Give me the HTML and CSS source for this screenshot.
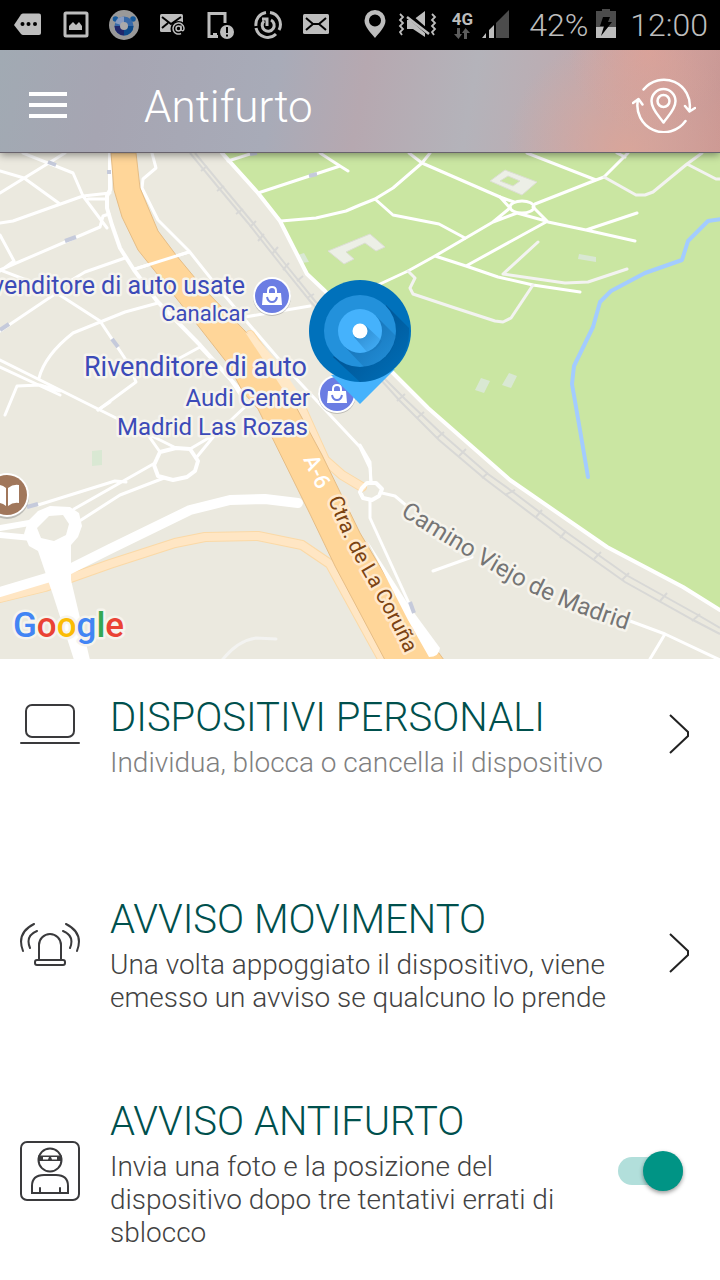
FILE: index.html
```html
<!DOCTYPE html>
<html lang="it">
<head>
    <meta charset="UTF-8">
    <meta name="viewport" content="width=device-width, initial-scale=1.0">
    <title>Antifurto</title>
    <link rel="stylesheet" href="styles.css">
</head>
<body>
    <div class="status-bar">
        <div class="status-left">
            <svg class="status-icon" viewBox="0 0 30 30"><path fill="#bdbdbd" d="M1 15L8 4.500Q9 3.500 10 3.500H26Q28 3.500 28 5.500V23Q28 25 26 25H10Q9 25 8 24Z"/><circle cx="9.500" cy="14" r="2"/><circle cx="15.500" cy="14" r="2"/><circle cx="22" cy="14" r="2"/></svg>
            <svg class="status-icon" viewBox="0 0 30 30"><rect x="4" y="3" width="22" height="23" rx="1" fill="none" stroke="#bdbdbd" stroke-width="3"/><path fill="#bdbdbd" d="M8 20V16L12 12L15 15L18 12L21 16V20Z"/></svg>
            <svg class="status-icon" viewBox="0 0 30 30"><circle cx="15" cy="15" r="15" fill="#999"/><circle cx="6.500" cy="9" r="2.800" fill="#15599c"/><circle cx="24" cy="9" r="2.800" fill="#15599c"/><circle cx="15" cy="16" r="9.500" fill="#3769a8"/><path fill="#879bc0" d="M15 16V6.500A9.500 9.500 0 0 0 6 13Z"/><path fill="#20276c" d="M15 16H5.500A9.500 9.500 0 0 0 15 25.500Z"/><path fill="#0c4a8a" d="M15 16H24.500A9.500 9.500 0 0 1 15 25.500Z"/><circle cx="15" cy="16" r="4" fill="#aaa"/></svg>
            <svg class="status-icon" viewBox="0 0 30 30"><rect x="3" y="4" width="23" height="18" rx="1.500" fill="#bdbdbd"/><path d="M5 7L14 14L24 7M5 18L11 13" fill="none" stroke="#000" stroke-width="2"/><circle cx="21.500" cy="19" r="8" fill="#000"/><circle cx="21.500" cy="18.500" r="2.500" fill="none" stroke="#bdbdbd" stroke-width="1.500"/><path d="M24 15.500V20Q27 22 27 18A5.500 5.500 0 1 0 24 23.500" fill="none" stroke="#bdbdbd" stroke-width="1.500"/></svg>
            <svg class="status-icon" viewBox="0 0 30 30"><path d="M20 13V3.500H4V26.500H13" fill="none" stroke="#bdbdbd" stroke-width="3"/><path d="M8 24H12" stroke="#bdbdbd" stroke-width="2"/><circle cx="22" cy="22" r="7" fill="#bdbdbd"/><path d="M22 17V23M22 24.500V26.500" stroke="#000" stroke-width="2"/></svg>
            <svg class="status-icon" viewBox="0 0 30 30"><g fill="none" stroke="#bdbdbd" stroke-width="3"><path d="M13 2.500A12 12 0 0 0 3 16M3 18A12 12 0 0 0 23 24M17 2.500A12 12 0 0 1 26 20"/><path d="M9 9H14V16M11 11A6 6 0 1 0 18 10"/></g></svg>
            <svg class="status-icon" viewBox="0 0 30 30"><rect x="2" y="4" width="26" height="20" rx="1.500" fill="#bdbdbd"/><path d="M5 8L12 14H18L25 8M5 20L12 14M25 20L18 14" fill="none" stroke="#000" stroke-width="2"/></svg>
        </div>
        <div class="status-right">
            <svg width="22" height="30" viewBox="0 0 22 30"><path fill="#bdbdbd" fill-rule="evenodd" d="M11 0A10.500 10.500 0 0 0 .5 10.500C.5 17 7 23 11 28C15 23 21.500 17 21.500 10.500A10.500 10.500 0 0 0 11 0ZM11 4.500A6 6 0 1 1 11 16.500A6 6 0 0 1 11 4.500Z"/></svg>
            <svg class="sound-icon" width="38" height="30" viewBox="0 0 38 30"><path fill="#bdbdbd" d="M9 10H15L27 1V27L15 19H9Z"/><path d="M10 5L32 24" stroke="#000" stroke-width="5"/><path d="M9 7L31 24" stroke="#bdbdbd" stroke-width="2.500"/><path d="M2 4L5 7L2 10L5 13L2 16L5 19L2 22L4 25M34 4L37 7L34 10L37 13L34 16L37 19L34 22L36 25" fill="none" stroke="#bdbdbd" stroke-width="1.800"/></svg>
            <div class="network">
                <span>4G</span>
                <svg width="16" height="12" viewBox="0 0 16 12"><path fill="#5c5c5c" d="M3 0H6V6H8L4.500 11L0 6H3ZM10 11H13V5H16L11.500 0L8 5H10Z"/></svg>
            </div>
            <svg width="28" height="30" viewBox="0 0 28 30"><path fill="#bdbdbd" d="M1 28L5 23V28ZM8 28V20L13 15V28Z"/><path fill="#4c4c4c" d="M15 28V13L28 0V28Z"/></svg>
            <span class="battery-level">42%</span>
            <svg width="20" height="30" viewBox="0 0 20 30"><path fill="#4c4c4c" d="M0 1H6V-1H14V1H20V28H0Z"/><path fill="#bdbdbd" d="M0 17H20V28H0Z"/><path d="M7 7H14L12 12H16L5 26L8 16H4Z"/></svg>
            <span class="clock">12:00</span>
        </div>
    </div>

    <header class="app-bar">
        <button class="menu-button" aria-label="Menu">
            <span></span>
            <span></span>
            <span></span>
        </button>
        <h1>Antifurto</h1>
        <button class="locate-button" aria-label="Localizza">
            <svg width="64" height="56" viewBox="0 0 64 56" fill="none" stroke="#fff" stroke-width="2.500" stroke-linecap="round" stroke-linejoin="round">
                <path d="M11.500 12.500A26 26 0 0 1 57.500 33M53 29L57.500 34.500L63 31"/>
                <path d="M53.500 44A26.500 26.500 0 0 1 6 23M1 26L6.500 22L10.500 27.500"/>
                <path d="M31.500 45.500C28 40 19.500 33 19.500 24A12 12 0 0 1 43.500 24C43.500 33 35 40 31.500 45.500Z"/>
                <circle cx="31.500" cy="24" r="6"/>
            </svg>
        </button>
    </header>

    <main>
        <section class="map" aria-label="Mappa">
            <svg viewBox="0 153 720 506" preserveAspectRatio="xMidYMid slice">
                <defs>
                    <path id="camino" d="M400 515C440 540 480 565 522 588Q575 615 650 637"/>
                    <path id="coruna" d="M328 499C340 530 351 553 368 582C382 607 394 628 410 664"/>
                    <linearGradient id="ring-shade" x1="0" y1="0" x2="1" y2="1">
                        <stop offset="0" stop-color="#003e76" stop-opacity="0.800"/>
                        <stop offset="1" stop-color="#003e76" stop-opacity="0"/>
                    </linearGradient>
                    <g id="shop">
                        <circle cy="1" r="19" fill="#777" opacity="0.400"/>
                        <circle r="19" fill="#fff"/>
                        <circle r="17" fill="#6b7de3"/>
                        <path fill="#fff" d="M-9 -3H9L10 9H-10Z"/>
                        <path d="M-4 -2V-5Q-4 -9 0 -9Q4 -9 4 -5V-2" fill="none" stroke="#fff" stroke-width="2"/>
                        <path d="M-5 1Q-4 6 0 6Q4 6 5 1" fill="none" stroke="#6b7de3" stroke-width="2"/>
                    </g>
                </defs>

                <rect y="153" width="720" height="506" fill="#ebe9df"/>
                <path class="park" d="M222 153L258 193L280 221L307 274L325 291L360 328L392 372L428 408L510 480L607 547L683 587L720 610V153Z"/>
                <path fill="#d9e8d3" d="M92 451L102 450V465L92 466ZM298 255L304 253L309 262L301 263ZM579 254L596 257V262L578 259ZM481 378L490 381L484 393L475 390ZM509 373L517 376L511 388L502 385Z"/>

                <!-- buildings -->
                <path class="building" fill-rule="evenodd" d="M505 170L537 182L522 195L490 181ZM508 176L500 181L513 186L520 181Z"/>
                <path class="building" d="M328 251L370 234L385 247L376 251L365 243L346 252L354 259L344 264Z"/>

                <!-- railway -->
                <g class="railway">
                    <path d="M190 153L218 187L248 223L281 265L310 301L381 380L400 401L439 440L485 479L510 498L563 538L625 582L695 621L720 634"/>
                    <path d="M195 153L223 187L253 223L286 265L315 301L386 380L405 399L442 434L488 474L513 492L566 532L628 576L698 615L720 628"/>
                    <path d="M201 171L207 166M217 191L224 186M236 214L243 209M250 227L256 221M258 241L264 234M272 254L278 247M283 270L289 263M297 281L303 276M307 298L314 294M397 401L405 394M417 418L424 412M437 438L444 432M459 456L466 449M482 478L488 473M505 495L515 490M536 517L542 510M560 538L566 531M594 559L601 552M622 580L629 573M660 601L667 593M692 621L700 614"/>
                </g>

                <!-- park roads -->
                <g class="street">
                    <path d="M409 153L422 163L500 197M430 153L422 163L393 188L375 199L360 205L346 211L316 218L281 221M258 193L340 166L320 153M340 166L348 171M228 161L253 153M375 199L393 215L439 224L465 238M527 153L596 180L604 177L628 153M596 180L535 204M617 153L625 157"/>
                    <path d="M500 197L514 202M500 197L510 208L493 222M517 213L493 222L435 256L408 271L380 284L360 293M517 213L546 221M533 207L548 222L586 230L635 241M586 230L637 213M546 222L466 266M435 256L466 266L498 277L533 285L580 292"/>
                    <ellipse cx="522" cy="207" rx="12" ry="6"/>
                </g>
                <g class="path">
                    <path d="M538 242L503 274L565 283L588 282L627 269M408 271L415 278L410 288L413 294L455 308L495 321L503 322L511 318L533 285M604 177L636 195L645 195L653 192L687 164L702 153M687 164L716 179H720"/>
                    <path d="M220 663Q236 641 256 638L276 639"/>
                </g>
                <path class="river" d="M722 219L708 221L688 241L682 260L645 273L611 291L600 302L593 327L574 366L572 384L580 430L588 477"/>
                <path class="road" d="M222 153L258 193L280 221L307 274L325 291L360 328L392 372L428 408L510 480L607 547L683 587L720 610"/>

                <!-- town streets -->
                <g class="street">
                    <path d="M0 171L24 178L60 204M23 153L73 173L83 196L107 228M65 153L0 193M0 223L13 221L83 196L110 193M88 199H107M0 235L14 261M0 270L100 227L103 216L109 214M14 261L0 271"/>
                    <path d="M125 258L85 272L55 290M55 292L100 321L128 363L136 382L98 410M0 331L58 292L0 270M158 303L125 312L73 333Q45 355 39 378"/>
                    <path d="M0 360L58 389L120 420M0 367L60 395M5 415L17 386L40 385L60 391M98 410L110 402M178 359L200 347L230 379L247 405M148 435L160 452M150 435L174 447M190 449L212 436M196 458L214 436L247 405"/>
                    <path d="M152 153L156 168L143 179L142 188L158 220L189 251L220 290L247 322L290 372L330 415L360 447L370 468L371 483M135 269L189 252M245 317L310 306"/>
                    <path d="M38 505L115 481L126 482M74 509L155 463M78 522L120 495L164 478M433 571L472 557M720 660L665 634L630 621M665 634L650 659"/>
                </g>
                <path class="road" d="M110 153V190L107 196V208L112 225L120 248L134 270L157 301L200 345L240 390"/>
                <path class="roundabout" d="M160 452L176 448L190 449L198 461L195 471L187 477L173 480L158 476L154 465Z"/>

                <!-- one way markers -->
                <path class="marker" d="M48 162L56 165M107 172H111M309 176L317 174M65 241L76 237M0 330L9 324M112 339L118 347M27 507L38 504M250 154L257 153"/>

                <!-- ramps and highway -->
                <path class="ramp-edge" d="M0 598L45 587L110 564L175 543L205 537L258 536L302 545L330 564L370 637L385 664M250 335L300 405L325 460L342 475L362 487"/>
                <path class="ramp" d="M0 598L45 587L110 564L175 543L205 537L258 536L302 545L330 564L370 637L385 664M250 335L300 405L325 460L342 475L362 487"/>
                <path class="highway" d="M111 153L114 190L122 217L138 250L158 275L192 318L228 364L243 392L258 409L310 514L335 566L385 660H444L400 600L360 533L322 455L295 405L270 365L245 331L205 290L176 255L158 231L140 188L136 153Z"/>
                <path fill="#ffe8c7" d="M245 332L260 342L280 365L310 410L300 405L282 388Z"/>
                <path class="street" d="M135 269L189 252"/>
                <path class="avenue" d="M0 592L60 574L110 549L190 510L230 500L265 499L298 503"/>
                <path class="avenue avenue-narrow" d="M0 528L35 522M0 535L32 538"/>
                <path fill="#fff" fill-rule="evenodd" d="M50 506L70 507L79 513L82 526L78 537L71 545V580L90 660H74L53 595L38 551L29 546L24 534L28 521L38 511ZM49 516L63 515L69 524L66 535L54 541L41 538L37 528Z"/>
                <path class="roundabout" d="M362 488L367 483H376L382 489L379 496L372 500L363 498L360 492Z"/>
                <path class="street" d="M370 500V518L402 588L412 610M382 493L395 496L408 507M371 483L370 462L360 445"/>
                <path fill="#fff" d="M367 540L408 604L415 614L440 648Q439 657 429 657L408 620L390 585Z"/>
                <path class="marker" d="M410 602L414 613"/>

                <g class="road-label">
                    <text class="highway-ref" transform="translate(303 459) rotate(65)">A-6</text>
                    <text class="label-coruna"><textPath href="#coruna">Ctra. de La Coruña</textPath></text>
                    <text class="label-camino"><textPath href="#camino">Camino Viejo de Madrid</textPath></text>
                </g>

                <use href="#shop" x="272" y="296"/>
                <use href="#shop" x="337" y="394"/>
                <circle cx="7" cy="497" r="22" fill="#777" opacity="0.400"/>
                <circle cx="7" cy="495" r="22" fill="#fff"/>
                <circle cx="7" cy="495" r="20" fill="#a1775b"/>
                <path fill="#fff" d="M8 488Q13 484 19 485V503Q13 502 8 506ZM6 488Q1 484 -5 485V503Q1 502 6 506Z"/>

                <g class="place-label">
                    <text class="place-large" x="245" y="294">Rivenditore di auto usate</text>
                    <text x="248" y="321">Canalcar</text>
                    <text class="place-title" x="307" y="376">Rivenditore di auto</text>
                    <text class="place-medium" x="310" y="406">Audi Center</text>
                    <text class="place-medium" x="308" y="435">Madrid Las Rozas</text>
                </g>

                <!-- device pin -->
                <path fill="#45b2fc" d="M331 375L360 404L395 369Z"/>
                <circle cx="360" cy="331" r="51" fill="#0071bb"/>
                <path fill="url(#ring-shade)" d="M386 305L409 328Q410 350 395 367Q380 382 360 382L333 357Z"/>
                <circle cx="360" cy="331" r="36" fill="#2391db"/>
                <path fill="url(#ring-shade)" opacity="0.600" d="M376 316L396 336Q393 362 364 367L344 346Z"/>
                <circle cx="360" cy="331" r="22" fill="#45b2fc"/>
                <path fill="url(#ring-shade)" opacity="0.500" d="M365 325L382 341Q378 351 367 352L354 337Z"/>
                <circle cx="360" cy="331" r="7.500" fill="#fff"/>

                <text class="google" x="13" y="637"><tspan fill="#4285f4">G</tspan><tspan fill="#ea4335">o</tspan><tspan fill="#fbbc05">o</tspan><tspan fill="#4285f4">g</tspan><tspan fill="#34a853">l</tspan><tspan fill="#ea4335">e</tspan></text>
            </svg>
        </section>

        <ul class="options">
            <li>
                <a class="option" href="#dispositivi">
                    <svg class="option-icon" viewBox="0 0 60 64"><rect x="6" y="1" width="48" height="32" rx="6"/><path d="M1 39H59"/></svg>
                    <div class="option-text">
                        <h2>DISPOSITIVI PERSONALI</h2>
                        <p class="muted">Individua, blocca o cancella il dispositivo</p>
                    </div>
                    <div class="option-action">
                        <svg class="chevron" viewBox="0 0 22 42"><path d="M2 2L20 19V23L2 40"/></svg>
                    </div>
                </a>
            </li>
            <li>
                <a class="option" href="#movimento">
                    <svg class="option-icon" viewBox="0 0 60 64"><path d="M19 37V22A11 11 0 0 1 41 22V37"/><rect x="15" y="37" width="30" height="5" rx="2"/><path d="M17 8Q5 13 10 25M43 8Q55 13 50 25M14 1Q-4 10 3 28M46 1Q64 10 57 28"/></svg>
                    <div class="option-text">
                        <h2>AVVISO MOVIMENTO</h2>
                        <p>Una volta appoggiato il dispositivo, viene emesso un avviso se qualcuno lo prende</p>
                    </div>
                    <div class="option-action">
                        <svg class="chevron" viewBox="0 0 22 42"><path d="M2 2L20 19V23L2 40"/></svg>
                    </div>
                </a>
            </li>
            <li>
                <div class="option">
                    <svg class="option-icon" viewBox="0 0 60 64"><rect x="1" y="1" width="58" height="58" rx="6"/><circle cx="30" cy="19" r="11.500"/><path fill="#3a3a3c" stroke="none" fill-rule="evenodd" d="M18 14.500H42V20H18ZM23 16V18.500H28L29 16ZM31 16L32 18.500H37V16Z"/><path d="M12 52V45Q12 34 24 34H36Q48 34 48 45V52ZM20 47V52M40 47V52"/></svg>
                    <label class="option-text" for="avviso-antifurto">
                        <h2>AVVISO ANTIFURTO</h2>
                        <p>Invia una foto e la posizione del dispositivo dopo tre tentativi errati di sblocco</p>
                    </label>
                    <div class="option-action">
                        <input class="switch" type="checkbox" id="avviso-antifurto" checked>
                    </div>
                </div>
            </li>
        </ul>
    </main>
</body>
</html>
```

FILE: styles.css
```css
* {
    box-sizing: border-box;
}
body {
    font-family: Roboto, "Noto Sans", sans-serif;
    font-weight: 300;
    background-color: #ffffff;
    color: #424242;
    margin: 0;
}
h1, h2, p, ul {
    margin: 0;
    padding: 0;
    font-weight: 300;
}
button {
    background: none;
    border: none;
    padding: 0;
    cursor: pointer;
}

/* Status bar */
.status-bar {
    display: flex;
    justify-content: space-between;
    align-items: center;
    height: 50px;
    padding: 0 12px 0 13px;
    background-color: #000000;
    color: #bdbdbd;
}
.status-bar svg {
    overflow: visible;
}
.status-left {
    display: flex;
    gap: 18px;
}
.status-icon {
    width: 30px;
    height: 30px;
}
.status-right {
    display: flex;
    align-items: center;
    gap: 8px;
    font-size: 32px;
    line-height: 48px;
}
.sound-icon {
    margin: 0 8px 0 4px;
}
.network {
    display: flex;
    flex-direction: column;
    align-items: center;
    font-size: 17px;
    font-weight: 700;
    line-height: 17px;
}
.battery-level {
    margin-left: 12px;
}
.clock {
    margin-left: 6px;
}

/* App bar */
.app-bar {
    position: relative;
    display: flex;
    align-items: center;
    height: 103px;
    padding: 8px 24px 0 29px;
    background-image:
        radial-gradient(circle at 90% 0, rgba(230, 162, 148, 0.6), transparent 80px),
        radial-gradient(circle at 87% 100%, rgba(222, 166, 152, 0.8), transparent 120px),
        linear-gradient(100deg, #a1aab3, #a6a5b2 15%, #a8abb8 38%, #b6a8b0 50%, #b4b3ba 65%, #bfaaaf 80%, #ca9793);
    border-bottom: 1px solid #68636c;
    box-shadow: 0 2px 8px rgba(0, 0, 0, 0.4);
}
.menu-button {
    display: grid;
    gap: 7px;
    width: 38px;
}
.menu-button span {
    height: 4px;
    background-color: #ffffff;
}
.app-bar h1 {
    flex: 1;
    margin-left: 77px;
    padding-top: 4px;
    color: #ffffff;
    font-size: 44px;
    line-height: 56px;
}
.locate-button svg {
    display: block;
}

/* Map */
.map svg {
    display: block;
    width: 100%;
}
.park {
    fill: #cae6a2;
}
.building {
    fill: #ecefe6;
    stroke: #dcded3;
}
.railway {
    fill: none;
    stroke: #d8d8d6;
    stroke-width: 2;
}
.street,
.road,
.path,
.river,
.roundabout,
.ramp,
.ramp-edge,
.avenue {
    fill: none;
    stroke: #ffffff;
    stroke-width: 3;
    stroke-linecap: round;
    stroke-linejoin: round;
}
.road,
.roundabout {
    stroke-width: 4;
}
.path {
    stroke: #f3f3f1;
}
.river {
    stroke: #a3ccff;
    stroke-width: 4;
}
.ramp {
    stroke: #ffe6c4;
    stroke-width: 8;
}
.ramp-edge {
    stroke: #fbd9a6;
    stroke-width: 10;
}
.highway {
    fill: #ffd699;
    stroke: #e6bd85;
}
.avenue {
    stroke-width: 10;
}
.avenue-narrow {
    stroke-width: 6;
}
.marker {
    stroke: #c5cadb;
    stroke-width: 4;
}
.road-label text,
.place-label text,
.google {
    paint-order: stroke;
    stroke: #f6f4ed;
    stroke-width: 5;
    stroke-linejoin: round;
    font-weight: 400;
}
.road-label .highway-ref {
    fill: #ffffff;
    stroke: none;
    font-size: 22px;
    font-weight: 500;
}
.road-label .label-coruna {
    fill: #7b4312;
    stroke: #ffe9cc;
    font-size: 21px;
}
.road-label .label-camino {
    fill: #757575;
    font-size: 24px;
}
.place-label {
    fill: #3c4bb8;
    font-size: 22px;
    text-anchor: end;
}
.place-large {
    font-size: 25px;
}
.place-title {
    font-size: 27px;
}
.place-medium {
    font-size: 24px;
}
.google {
    font-size: 35px;
    font-weight: 500;
}

/* Options */
.options {
    list-style: none;
    padding: 34px 30px 0 20px;
}
.options li {
    min-height: 202px;
}
.option {
    display: flex;
    align-items: center;
    color: #424242;
    text-decoration: none;
}
.option-icon {
    flex: none;
    width: 60px;
    height: 64px;
    margin-right: 30px;
    fill: none;
    stroke: #3a3a3c;
    stroke-width: 2;
    stroke-linecap: round;
}
.option-text {
    flex: 1;
}
.option h2 {
    margin-bottom: 3px;
    color: #00504d;
    font-size: 40px;
    line-height: 50px;
}
.option p {
    font-size: 28px;
    line-height: 33px;
}
.option .muted {
    color: #808080;
}
.option-action {
    display: flex;
    flex: none;
    width: 72px;
    padding-bottom: 4px;
}
.chevron {
    width: 22px;
    height: 42px;
    margin-left: auto;
    fill: none;
    stroke: #222222;
    stroke-width: 2;
}
.switch {
    appearance: none;
    display: flex;
    align-items: center;
    justify-content: flex-end;
    width: 65px;
    height: 28px;
    margin: 0;
    background-color: #b2dfdb;
    border-radius: 14px;
    cursor: pointer;
}
.switch::before {
    content: "";
    flex: none;
    width: 40px;
    height: 40px;
    border-radius: 50%;
    background-color: #009485;
    box-shadow: 0 2px 4px rgba(0, 0, 0, 0.4);
}
.switch:not(:checked) {
    justify-content: flex-start;
}
```
